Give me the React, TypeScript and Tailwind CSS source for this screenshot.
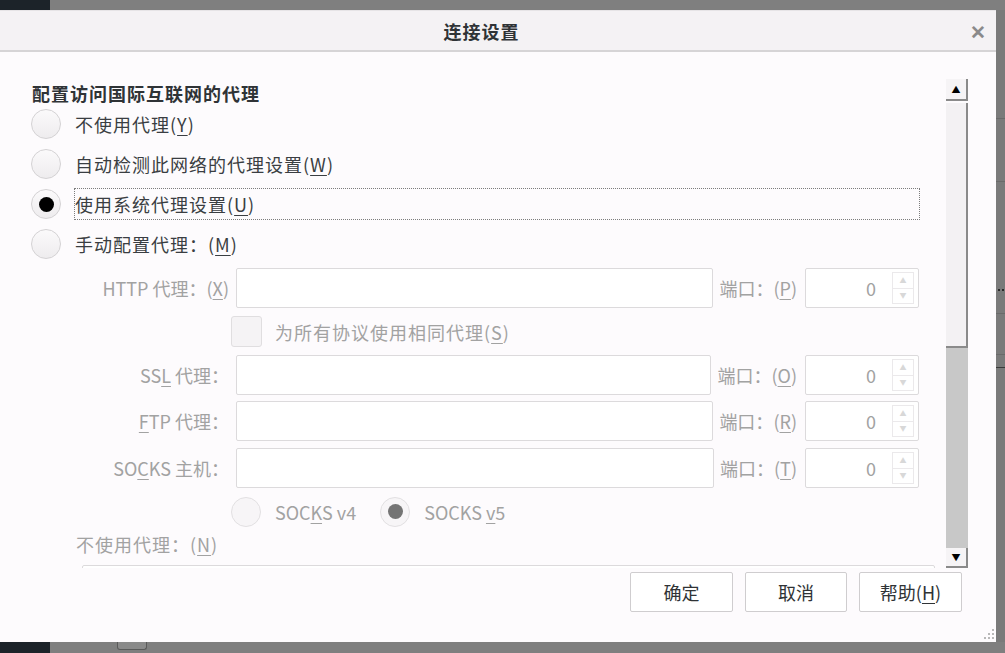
import React from "react";

const font = "font-['Noto_Sans_CJK_SC','Noto_Sans',sans-serif]";

function Mn({ k }: { k: string }) {
  return <span className="underline underline-offset-[3px] decoration-1">{k}</span>;
}

function Radio({ checked = false, disabled = false }: { checked?: boolean; disabled?: boolean }) {
  return (
    <span
      className={`flex h-[30px] w-[30px] shrink-0 items-center justify-center rounded-full border ${
        disabled ? "border-[#e2e0e2] bg-[#f7f5f7]" : "border-[#d4d2d4] bg-gradient-to-b from-[#fbfafb] to-[#eeecee]"
      }`}
    >
      {checked ? (
        <span className={`h-[15px] w-[15px] rounded-full ${disabled ? "bg-[#747474]" : "bg-black"}`} />
      ) : null}
    </span>
  );
}

function Checkbox() {
  return <span className="block h-[31px] w-[31px] shrink-0 rounded-[3px] border border-[#e0dee0] bg-[#f5f3f5]" />;
}

function TextBox({ className = "" }: { className?: string }) {
  return <div className={`h-[40px] rounded-[2px] border border-[#dcdadc] bg-white ${className}`} />;
}

function PortBox() {
  return (
    <div className="flex h-[40px] w-[114px] shrink-0 items-center rounded-[2px] border border-[#dcdadc] bg-white pl-2 pr-[4px]">
      <span className="flex-1 pr-[16px] text-right text-[#a2a2a2]">0</span>
      <div className="flex h-[32px] w-[22px] flex-col border border-[#ebe9eb]">
        <span className="flex flex-1 items-center justify-center border-b border-[#ebe9eb] text-[7px] leading-none text-[#d8d8d8]">▲</span>
        <span className="flex flex-1 items-center justify-center text-[7px] leading-none text-[#d8d8d8]">▼</span>
      </div>
    </div>
  );
}

function ProxyRow({ label, port }: { label: React.ReactNode; port: React.ReactNode }) {
  return (
    <div className="flex h-[40px] items-center text-[#a2a2a2]">
      <div className="w-[153px] shrink-0 text-right">{label}</div>
      <TextBox className="ml-[7px] flex-1" />
      <span className="ml-[6px] shrink-0">端口：{port}</span>
      <span className="ml-[8px]" />
      <PortBox />
    </div>
  );
}

export default function App() {
  return (
    <div className={`flex h-[653px] w-[1005px] flex-col overflow-hidden bg-[#7f7f7f] ${font} text-[18px] leading-[22px]`}>
      <div className="flex h-[10px] shrink-0">
        <div className="w-[50px] bg-[#1c2329]" />
      </div>

      <div className="flex h-[632px] shrink-0">
        {/* dialog */}
        <div className="flex w-[996px] shrink-0 flex-col border-t border-[#e6e4e6] bg-[#fdfbfd] shadow-[1px_0_0_#5a5a5a]">
          <div className="relative flex h-[41px] shrink-0 items-center justify-center border-b-2 border-[#d6d4d6] bg-[#f4f2f4] pr-[33px]">
            <span className="font-bold tracking-[1px] text-[#2f3336]">连接设置</span>
            <span className="absolute right-[10px] top-[10px] text-[19px] font-bold leading-none text-[#8a8a8a]">✕</span>
          </div>

          <div className="mt-[27px] flex h-[489px] shrink-0 overflow-hidden">
            {/* scrolled content */}
            <div className="flex-1 overflow-hidden pt-[3px] tracking-[1px]">
              <div className="pl-[32px] font-bold text-[#2f3336]">配置访问国际互联网的代理</div>
              <div className="pl-[31px] text-[#3a3e42]">
                <div className="flex h-[40px] items-center gap-[14px]">
                  <Radio />
                  <span>不使用代理(<Mn k="Y" />)</span>
                </div>
                <div className="flex h-[40px] items-center gap-[14px]">
                  <Radio />
                  <span>自动检测此网络的代理设置(<Mn k="W" />)</span>
                </div>
                <div className="flex h-[40px] items-center gap-[13px]">
                  <Radio checked />
                  <span className="flex h-[32px] w-[846px] items-center border border-dotted border-[#7c7c7c]">
                    使用系统代理设置(<Mn k="U" />)
                  </span>
                </div>
                <div className="flex h-[40px] items-center gap-[14px]">
                  <Radio />
                  <span>手动配置代理：(<Mn k="M" />)</span>
                </div>
              </div>

              <div className="w-[919px] pl-[76px] tracking-normal">
                <div className="mt-[4px]">
                  <ProxyRow label={<>HTTP 代理：(<Mn k="X" />)</>} port={<>(<Mn k="P" />)</>} />
                </div>
                <div className="mt-[8px] flex h-[31px] items-center pl-[155px] text-[#a2a2a2]">
                  <Checkbox />
                  <span className="ml-[13px] tracking-[1px]">为所有协议使用相同代理(<Mn k="S" />)</span>
                </div>
                <div className="mt-[8px]">
                  <ProxyRow label={<>SS<Mn k="L" /> 代理：</>} port={<>(<Mn k="O" />)</>} />
                </div>
                <div className="mt-[6px]">
                  <ProxyRow label={<><Mn k="F" />TP 代理：</>} port={<>(<Mn k="R" />)</>} />
                </div>
                <div className="mt-[7px]">
                  <ProxyRow label={<>SO<Mn k="C" />KS 主机：</>} port={<>(<Mn k="T" />)</>} />
                </div>
                <div className="mt-[8px] flex h-[31px] items-center pl-[155px] text-[#a2a2a2]">
                  <Radio disabled />
                  <span className="ml-[14px]">SOC<Mn k="K" />S v4</span>
                  <span className="ml-[24px]" />
                  <Radio checked disabled />
                  <span className="ml-[14px]">SOCKS <Mn k="v" />5</span>
                </div>
                <div className="mt-[6px] h-[26px] tracking-[1px] text-[#a2a2a2]">不使用代理：(<Mn k="N" />)</div>
              </div>
              <div className="ml-[82px] mt-[6px] h-[60px] w-[853px] rounded-[2px] border border-[#dcdadc] bg-white" />
            </div>

            {/* scrollbar */}
            <div className="mr-[28px] flex w-[22px] shrink-0 flex-col">
              <div className="flex h-[22px] items-center justify-center border-b-2 border-r-2 border-[#8a8a8a] bg-[#f6f4f6] text-[9px] leading-none text-black">▲</div>
              <div className="mt-[2px] h-[245px] border-b-2 border-r-2 border-[#8a8a8a] bg-[#f3f1f3]" />
              <div className="flex-1 bg-[#c8c8c8]" />
              <div className="flex h-[20px] items-center justify-center border-b-2 border-r-2 border-[#8a8a8a] bg-[#f6f4f6] text-[9px] leading-none text-black">▼</div>
            </div>
          </div>

          <div className="mt-[4px] flex justify-end gap-[12px] pr-[34px] text-[#2f3336]">
            <button className="h-[40px] w-[103px] rounded-[2px] border border-[#cfcdcf] bg-white">确定</button>
            <button className="h-[40px] w-[102px] rounded-[2px] border border-[#cfcdcf] bg-white">取消</button>
            <button className="h-[40px] w-[103px] rounded-[2px] border border-[#cfcdcf] bg-white">
              帮助(<Mn k="H" />)
            </button>
          </div>

          <div className="mt-auto flex justify-end pb-[2px] pr-[1px]">
            <svg width="12" height="12" viewBox="0 0 12 12">
              <g fill="#b8b8b8">
                <rect x="9" y="1" width="2" height="2" />
                <rect x="5" y="5" width="2" height="2" />
                <rect x="9" y="5" width="2" height="2" />
                <rect x="1" y="9" width="2" height="2" />
                <rect x="5" y="9" width="2" height="2" />
                <rect x="9" y="9" width="2" height="2" />
              </g>
            </svg>
          </div>
        </div>

        {/* strip of the window behind */}
        <div className="flex min-w-0 flex-1 flex-col overflow-hidden bg-[#7a7a7a]">
          <div className="mt-[108px] h-px bg-[#6a6a6a]" />
          <div className="mt-[62px] h-px bg-[#6a6a6a]" />
          <div className="mt-[107px] flex gap-[2px] pl-[2px]">
            <span className="h-[2px] w-[2px] bg-[#2a2a2a]" />
            <span className="h-[2px] w-[2px] bg-[#2a2a2a]" />
          </div>
          <div className="mt-[22px] h-px bg-[#6a6a6a]" />
          <div className="mt-[40px] h-px bg-[#6a6a6a]" />
          <div className="mt-[12px] h-px bg-[#3a3a3a]" />
        </div>
      </div>

      <div className="flex h-[11px] shrink-0">
        <div className="w-[50px] bg-[#1c2329]" />
        <div className="ml-[67px] h-[8px] w-[30px] rounded-b-[3px] border border-t-0 border-[#5a5a5a] bg-[#8a8a8a]" />
      </div>
    </div>
  );
}
